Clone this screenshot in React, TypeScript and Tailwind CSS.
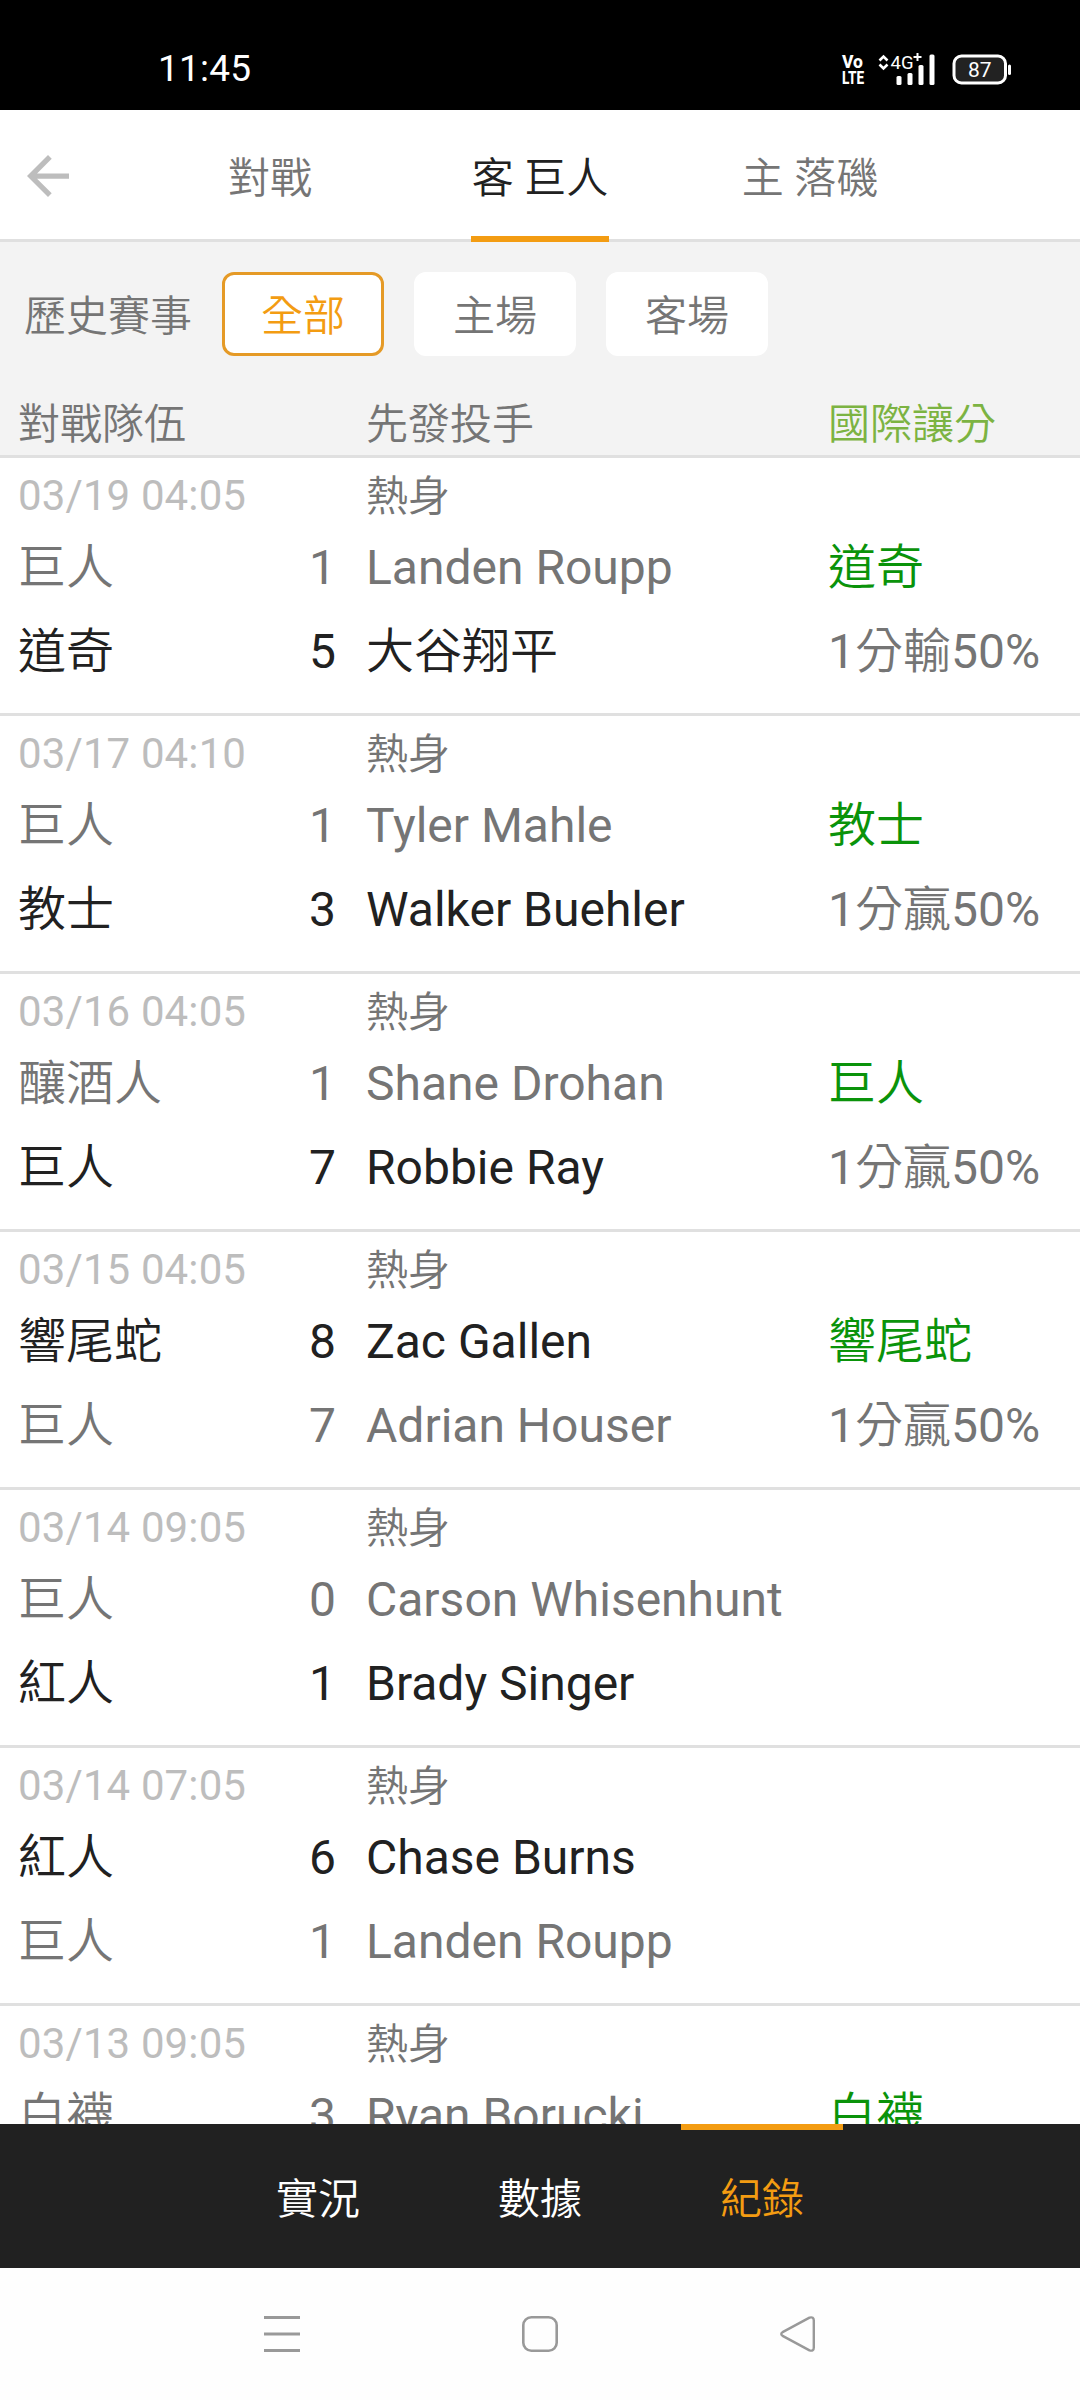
import React, { useState } from 'react';
import clsx from 'clsx';

interface Side {
  team: string;
  score: number;
  pitcher: string;
}

interface Game {
  id: number;
  date: string;
  type: string;
  away: Side;
  home?: Side;
  awayWin: boolean;
  handicap?: { team: string; line?: string };
}

const games: Game[] = [
  {
    id: 1,
    date: '03/19 04:05',
    type: '熱身',
    away: { team: '巨人', score: 1, pitcher: 'Landen Roupp' },
    home: { team: '道奇', score: 5, pitcher: '大谷翔平' },
    awayWin: false,
    handicap: { team: '道奇', line: '1分輸50%' },
  },
  {
    id: 2,
    date: '03/17 04:10',
    type: '熱身',
    away: { team: '巨人', score: 1, pitcher: 'Tyler Mahle' },
    home: { team: '教士', score: 3, pitcher: 'Walker Buehler' },
    awayWin: false,
    handicap: { team: '教士', line: '1分贏50%' },
  },
  {
    id: 3,
    date: '03/16 04:05',
    type: '熱身',
    away: { team: '釀酒人', score: 1, pitcher: 'Shane Drohan' },
    home: { team: '巨人', score: 7, pitcher: 'Robbie Ray' },
    awayWin: false,
    handicap: { team: '巨人', line: '1分贏50%' },
  },
  {
    id: 4,
    date: '03/15 04:05',
    type: '熱身',
    away: { team: '響尾蛇', score: 8, pitcher: 'Zac Gallen' },
    home: { team: '巨人', score: 7, pitcher: 'Adrian Houser' },
    awayWin: true,
    handicap: { team: '響尾蛇', line: '1分贏50%' },
  },
  {
    id: 5,
    date: '03/14 09:05',
    type: '熱身',
    away: { team: '巨人', score: 0, pitcher: 'Carson Whisenhunt' },
    home: { team: '紅人', score: 1, pitcher: 'Brady Singer' },
    awayWin: false,
  },
  {
    id: 6,
    date: '03/14 07:05',
    type: '熱身',
    away: { team: '紅人', score: 6, pitcher: 'Chase Burns' },
    home: { team: '巨人', score: 1, pitcher: 'Landen Roupp' },
    awayWin: true,
  },
  {
    id: 7,
    date: '03/13 09:05',
    type: '熱身',
    away: { team: '白襪', score: 3, pitcher: 'Ryan Borucki' },
    awayWin: false,
    handicap: { team: '白襪' },
  },
];

const tabs = ['對戰', '客 巨人', '主 落磯'];
const filters = ['全部', '主場', '客場'];
const menus = ['實況', '數據', '紀錄'];

const StatusBar: React.FC = () => (
  <div className="flex h-[110px] shrink-0 items-center justify-between bg-black pl-[158px] pr-[68px] pt-7 text-white">
    <span className="text-[37px] leading-[40px] tracking-[0.2px]">11:45</span>
    <svg className="overflow-visible" width="170" height="32" viewBox="0 0 170 32" fill="#fff" fontFamily="Roboto, sans-serif">
      <text x="0" y="14.5" fontSize="18" fontWeight="800" textLength="21" lengthAdjust="spacingAndGlyphs">Vo</text>
      <text x="0" y="30.5" fontSize="18.5" fontWeight="800" textLength="22" lengthAdjust="spacingAndGlyphs">LTE</text>
      {/* data arrows */}
      <path d="M37.5 7.5l4-4 4 4M37.5 11.5l4 4 4-4" fill="none" stroke="#fff" strokeWidth="2.6" />
      <text x="48.5" y="15.5" fontSize="19" textLength="23" lengthAdjust="spacingAndGlyphs">4G</text>
      <path d="M71.5 4h8M75.5 0v8" stroke="#fff" strokeWidth="2" />
      <rect x="54.5" y="23" width="5" height="9" rx="1.5" />
      <rect x="65.5" y="20" width="5" height="12" rx="1.5" />
      <rect x="76.5" y="12" width="5" height="20" rx="1.5" />
      <rect x="87.5" y="1.5" width="5" height="30.5" rx="1.5" />
      {/* battery */}
      <rect x="112" y="3" width="51.5" height="27" rx="7.5" fill="#222" stroke="#fff" strokeWidth="3" />
      <rect x="166" y="11.5" width="3" height="10.5" rx="1.5" />
      <text x="137.7" y="24" fontSize="21" textAnchor="middle">87</text>
    </svg>
  </div>
);

interface LineProps {
  side: Side;
  win: boolean;
  children?: React.ReactNode;
}

const GameLine: React.FC<LineProps> = ({ side, win, children }) => (
  <div
    className={clsx(
      'grid h-[84px] grid-cols-[260px_58px_30px_462px_1fr] whitespace-nowrap text-[48px] leading-[84px]',
      win ? 'text-[#212121]' : 'text-[#757575]'
    )}
  >
    <span>{side.team}</span>
    <span className="text-right">{side.score}</span>
    <span />
    <span>{side.pitcher}</span>
    {children}
  </div>
);

const GameRow: React.FC<{ game: Game }> = ({ game }) => (
  <div className="h-[258px] shrink-0 border-b-[3px] border-[#e0e0e0] pl-[18px] pt-2">
    <div className="grid h-[60px] grid-cols-[348px_1fr] text-[42px] leading-[60px]">
      <span className="tracking-[0.12px] text-[#bdbdbd]">{game.date}</span>
      <span className="leading-[62px] text-[#757575]">{game.type}</span>
    </div>
    <GameLine side={game.away} win={game.awayWin}>
      {game.handicap && <span className="text-[#0a930a]">{game.handicap.team}</span>}
    </GameLine>
    {game.home && (
      <GameLine side={game.home} win={!game.awayWin}>
        {game.handicap && <span className="text-[#757575]">{game.handicap.line}</span>}
      </GameLine>
    )}
  </div>
);

const App: React.FC = () => {
  const [tab, setTab] = useState(1);
  const [filter, setFilter] = useState(0);
  const [menu, setMenu] = useState(2);

  return (
    <div className="flex h-[2400px] w-[1080px] flex-col overflow-hidden bg-white font-[Roboto,'Noto_Sans_CJK_TC_DemiLight','Noto_Sans_CJK_TC',sans-serif]">
      <StatusBar />

      {/* Top tabs */}
      <div className="flex h-[132px] shrink-0 border-b-[3px] border-[#e0e0e0]">
        <button className="flex w-[135px] items-center pl-[27px] pt-[3px]">
          <svg width="42" height="42" viewBox="4 4 16 16" fill="#bdbdbd">
            <path d="M20 11H7.83l5.59-5.59L12 4l-8 8 8 8 1.41-1.41L7.83 13H20v-2z" />
          </svg>
        </button>
        {tabs.map((name, i) => (
          <button key={name} onClick={() => setTab(i)} className="flex w-[270px] justify-center">
            <span
              className={clsx(
                'h-[132px] min-w-[138px] border-b-[6px] pt-[11px] text-center text-[42px] leading-[115px]',
                tab === i ? 'border-[#f39c12] text-[#212121]' : 'border-transparent text-[#757575]'
              )}
            >
              {name}
            </span>
          </button>
        ))}
      </div>

      {/* Filters and column titles */}
      <div className="h-[216px] shrink-0 border-b-[3px] border-[#e0e0e0] bg-[#f3f3f3] pt-[30px] text-[42px] text-[#757575]">
        <div className="flex h-[84px] items-center gap-[30px] pl-6">
          <span className="pt-[5px]">歷史賽事</span>
          {filters.map((name, i) => (
            <button
              key={name}
              onClick={() => setFilter(i)}
              className={clsx(
                'h-[84px] w-[162px] rounded-xl border-[3px] bg-white pt-[5px] leading-[73px]',
                filter === i ? 'border-[#e59a26] text-[#f39c12]' : 'border-white'
              )}
            >
              {name}
            </button>
          ))}
        </div>
        <div className="grid grid-cols-[348px_462px_1fr] pl-[18px] pt-[39px] leading-[60px]">
          <span>對戰隊伍</span>
          <span>先發投手</span>
          <span className="text-[#7cb342]">國際讓分</span>
        </div>
      </div>

      {/* Game list */}
      <div className="flex min-h-0 flex-1 flex-col overflow-hidden">
        {games.map(game => (
          <GameRow key={game.id} game={game} />
        ))}
      </div>

      {/* Bottom menu */}
      <div className="flex h-[144px] shrink-0 justify-center gap-[60px] bg-[#212121]">
        {menus.map((name, i) => (
          <button
            key={name}
            onClick={() => setMenu(i)}
            className={clsx(
              'h-[144px] w-[162px] border-t-[6px] pt-0.5 text-[42px] leading-[132px]',
              menu === i ? 'border-[#f39c12] text-[#f39c12]' : 'border-transparent text-white'
            )}
          >
            {name}
          </button>
        ))}
      </div>

      {/* System navigation */}
      <div className="flex h-[132px] shrink-0 items-center justify-between bg-[#fefefe] pl-[264px] pr-[264px]">
        <svg width="36" height="36" viewBox="0 0 36 36" stroke="#999" strokeWidth="3">
          <path d="M0 1.5h36M0 18h36M0 34.5h36" />
        </svg>
        <svg width="36" height="36" viewBox="0 0 36 36" fill="none" stroke="#999" strokeWidth="2.6">
          <rect x="1.3" y="1.3" width="33.4" height="33.4" rx="8" />
        </svg>
        <svg width="36" height="36" viewBox="0 0 36 36" fill="none" stroke="#999" strokeWidth="2.4" strokeLinejoin="round">
          <path d="M2.6 16.1L29.5 1.6Q33.8 0.4 33.8 4.5V31.5Q33.8 35.6 29.5 34.4L2.6 19.9Q0 18 2.6 16.1z" />
        </svg>
      </div>
    </div>
  );
};

export default App;
